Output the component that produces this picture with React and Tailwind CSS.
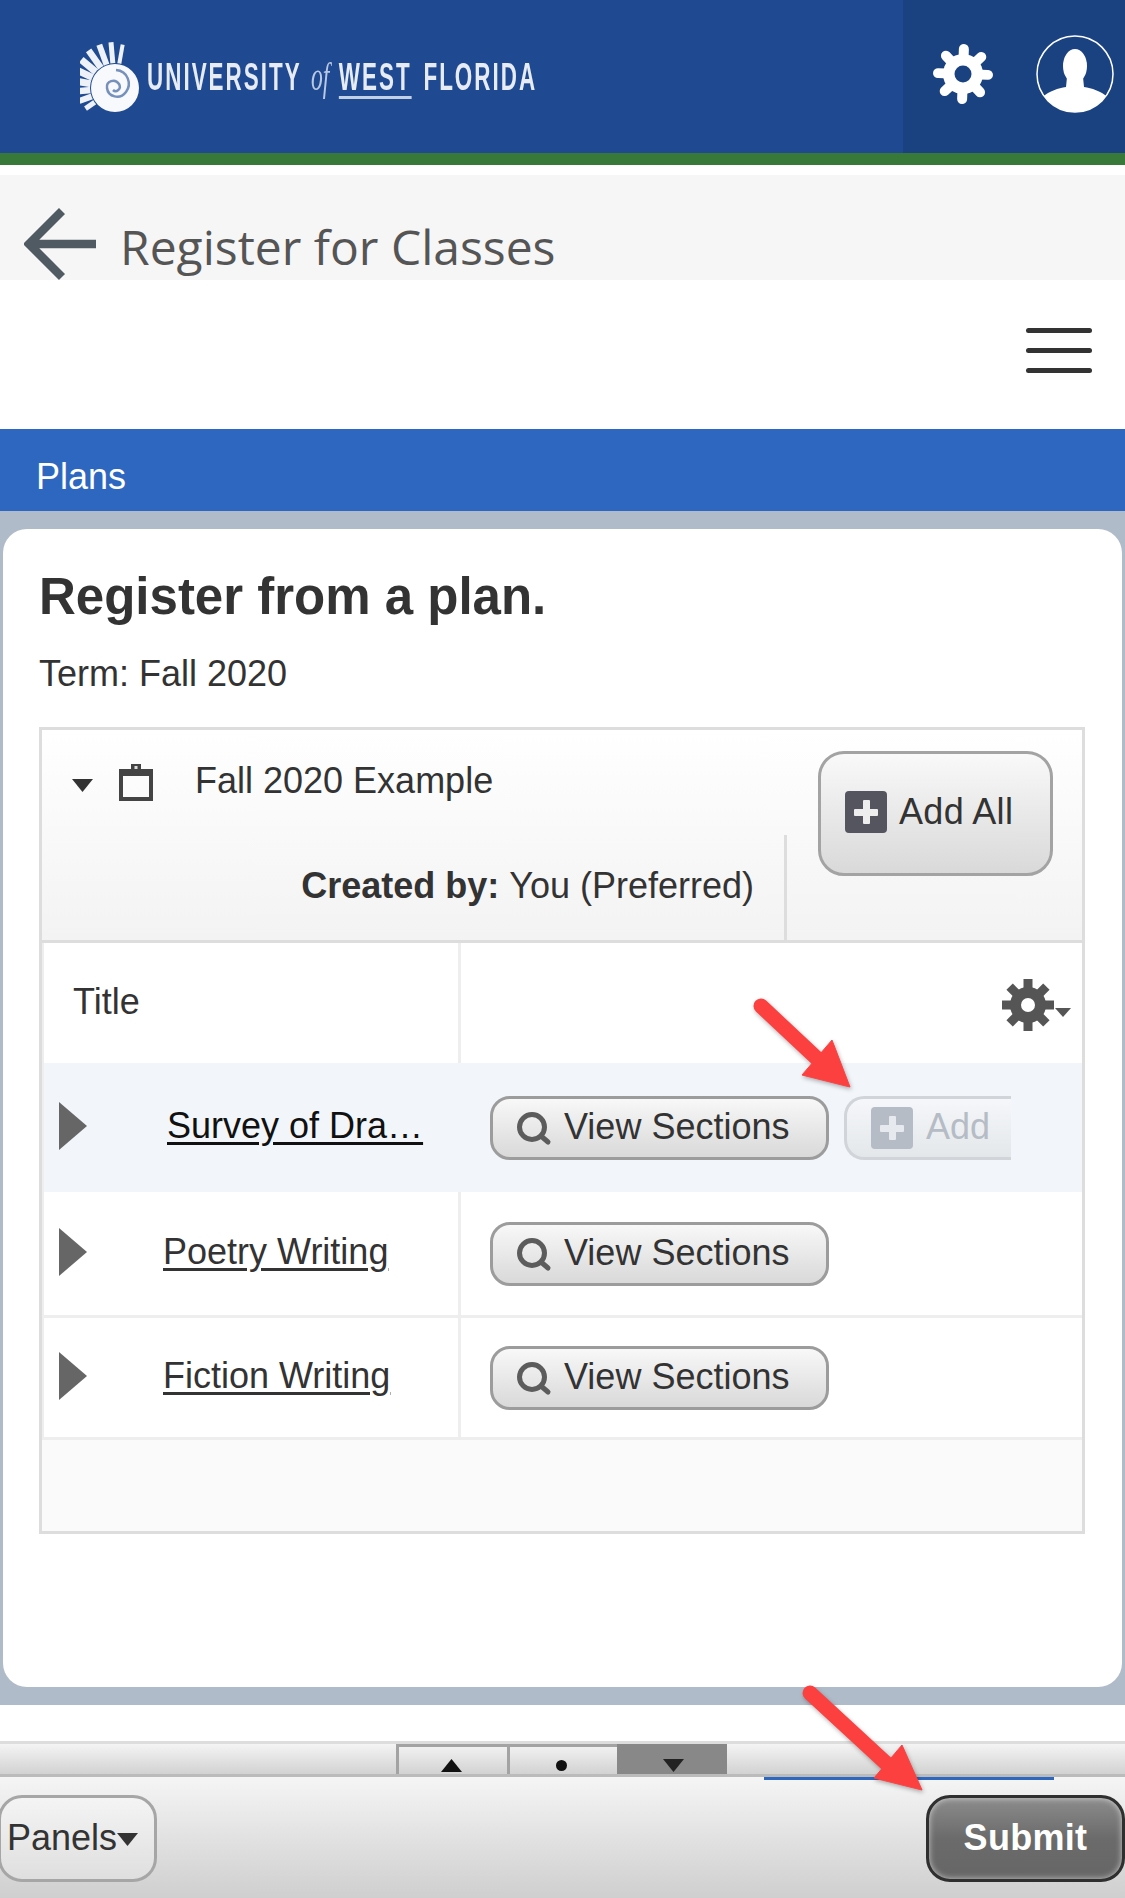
const ANGLES = [0, 45, 90, 135, 180, 225, 270, 315];

function HeaderGear() {
  return (
    <svg width="62" height="62" viewBox="0 0 62 62" className="block">
      <g stroke="#fff" strokeWidth="10" strokeLinecap="round">
        {ANGLES.map((a) => (
          <line key={a} x1="31" y1="31" x2="31" y2="6" transform={`rotate(${a + 2} 31 31)`} />
        ))}
      </g>
      <circle cx="31" cy="31" r="20" fill="#fff" />
      <circle cx="31" cy="31" r="8.5" fill="#1b4280" />
    </svg>
  );
}

function Avatar() {
  return (
    <svg width="78" height="78" viewBox="0 0 78 78" className="block">
      <defs>
        <clipPath id="avatarClip">
          <circle cx="39" cy="39" r="38" />
        </clipPath>
      </defs>
      <g clipPath="url(#avatarClip)" fill="#fff">
        <ellipse cx="39" cy="31" rx="12" ry="17" />
        <path d="M31 42 L47 42 L48 52 C56 53 64 56 72 62 L72 80 L6 80 L6 62 C14 56 22 53 30 52 Z" />
      </g>
      <circle cx="39" cy="39" r="38" fill="none" stroke="#fff" strokeWidth="1.5" />
    </svg>
  );
}

function Shell() {
  const rays = [
    [-80, 44, 4], [-95, 46, 5], [-110, 46, 6], [-125, 46, 6.5], [-140, 44, 7],
    [-155, 42, 7], [-170, 40, 7], [-185, 38, 6.5], [-200, 38, 6], [-215, 36, 5],
  ];
  return (
    <svg width="60" height="76" viewBox="0 0 60 76" className="block blur-[0.5px]">
      <g stroke="#eef2f8" strokeLinecap="butt">
        {rays.map(([a, len, w]) => {
          const rad = (a * Math.PI) / 180;
          const cx = 35;
          const cy = 50;
          return (
            <line
              key={a}
              x1={cx + Math.cos(rad) * 12}
              y1={cy + Math.sin(rad) * 12}
              x2={cx + Math.cos(rad) * len}
              y2={cy + Math.sin(rad) * len}
              strokeWidth={w}
            />
          );
        })}
      </g>
      <circle cx="35" cy="50" r="25" fill="#1f4a91" />
      <circle cx="35" cy="50" r="24" fill="#f7f9fc" />
      <path
        d="M36 32 C48 33 52 46 46 54 C40 62 28 59 27 50 C26 43 35 40 39 46 C42 51 36 55 33 52"
        fill="none"
        stroke="#1f4a91"
        strokeWidth="2.5"
        opacity="0.6"
      />
    </svg>
  );
}

function Logo() {
  return (
    <div className="flex items-center ml-[80px] h-[153px] pb-[2px]">
      <Shell />
      <div className="ml-[7px] w-[400px] h-[48px] pt-[3px] blur-[0.4px]">
        <div className="flex items-baseline origin-left scale-x-[0.59] text-[#e6ebf4] whitespace-nowrap w-[680px]">
          <span className="text-[38px] font-bold tracking-[3.4px] leading-[44px]">UNIVERSITY</span>
          <span className="text-[40px] italic leading-[44px] ml-[16px] text-[#b9c9e2]" style={{ fontFamily: '"Liberation Serif",serif' }}>
            of
          </span>
          <span className="text-[38px] font-bold tracking-[3.4px] leading-[44px] ml-[16px] underline decoration-[3px] underline-offset-[6px] decoration-[#c2d0e6]">
            WEST
          </span>
          <span className="text-[38px] font-bold tracking-[3.4px] leading-[44px] ml-[20px]">FLORIDA</span>
        </div>
      </div>
    </div>
  );
}

function PlusBox({ muted }) {
  return (
    <span className={`relative inline-block w-[42px] h-[42px] rounded-[4px] shrink-0 ${muted ? "bg-[#b5bcc5]" : "bg-[#55555f]"}`}>
      <span className={`absolute left-[9px] top-[18px] w-[24px] h-[7px] rounded-[1px] ${muted ? "bg-[#e6e9ee]" : "bg-[#eeeeee]"}`} />
      <span className={`absolute left-[17.5px] top-[9px] w-[7px] h-[24px] rounded-[1px] ${muted ? "bg-[#e6e9ee]" : "bg-[#eeeeee]"}`} />
    </span>
  );
}

function ViewSections() {
  return (
    <button className="flex items-center w-[339px] h-[64px] rounded-[20px] border-[3px] border-[#9c9c9c] bg-gradient-to-b from-[#f8f8f8] to-[#d9d9d9] pl-[23px] text-[36px] leading-none text-[#333] shrink-0">
      <svg width="36" height="36" viewBox="0 0 36 36" className="block shrink-0 mt-[3px]">
        <circle cx="16" cy="16" r="12.5" fill="none" stroke="#5c5c5c" strokeWidth="5" />
        <line x1="25" y1="25" x2="32" y2="31" stroke="#5c5c5c" strokeWidth="5" strokeLinecap="round" />
      </svg>
      <span className="ml-[12px] mt-[-2px]">View Sections</span>
    </button>
  );
}

function RowArrow() {
  return (
    <svg width="28" height="48" viewBox="0 0 28 48" className="block shrink-0">
      <path d="M0 0 L28 24 L0 48 Z" fill="#666" />
    </svg>
  );
}

function Caret({ w = 21, h = 13, color = "#333", up = false }) {
  return (
    <svg width={w} height={h} viewBox="0 0 21 13" className="block shrink-0">
      <path d={up ? "M0 13 L21 13 L10.5 0 Z" : "M0 0 L21 0 L10.5 13 Z"} fill={color} />
    </svg>
  );
}

function Row({ title, titlePad, extra, tint, last }) {
  return (
    <div className={`grid grid-cols-[419px_1fr] ${last ? "h-[122px]" : tint ? "h-[129px]" : "h-[126px]"} ${tint ? "bg-[#f2f6fb]" : "bg-white border-b-[3px] border-[#eeeeee]"}`}>
      <div className={`flex items-center pl-[15px] pb-[3px] border-l-[2px] border-[#eeeeee] ${tint ? "" : "border-r-[3px]"}`}>
        <RowArrow />
        <a
          className={`block underline underline-offset-[4px] text-[36px] leading-[44px] whitespace-nowrap ${tint ? "text-[#111]" : "text-[#333]"}`}
          style={{ marginLeft: titlePad }}
        >
          {title}
        </a>
      </div>
      <div className="flex items-center pl-[29px]">
        <ViewSections />
        {extra}
      </div>
    </div>
  );
}

export default function App() {
  return (
    <div
      className="relative w-[1125px] h-[1898px] overflow-hidden flex flex-col bg-white text-[#333]"
      style={{ fontFamily: '"Liberation Sans",Arial,sans-serif' }}
    >
      <header className="h-[153px] flex justify-between bg-[#1f4a91] shrink-0">
        <Logo />
        <div className="w-[222px] bg-[#1b4280] flex items-center pl-[29px] pb-[6px]">
          <HeaderGear />
          <div className="ml-[42px]">
            <Avatar />
          </div>
        </div>
      </header>
      <div className="h-[12px] bg-[#387838] shrink-0" />
      <div className="h-[10px] bg-white shrink-0" />
      <div className="h-[105px] bg-[#f6f6f6] shrink-0 overflow-hidden flex items-start pl-[24px] pt-[35px]">
        <svg width="72" height="72" viewBox="0 0 72 72" className="block shrink-0 mt-[-2px]">
          <path d="M38 3 L5 36 L38 69 M5 36 L72 36" fill="none" stroke="#4f5a63" strokeWidth="8.5" />
        </svg>
        <div
          className="ml-[24px] mt-[1px] text-[48px] leading-[72px] text-[#555] font-normal"
          style={{ fontFamily: '"Open Sans",sans-serif' }}
        >
          Register for Classes
        </div>
      </div>
      <div className="h-[149px] bg-white shrink-0 flex justify-end pr-[33px] pt-[48px]">
        <div className="w-[66px] flex flex-col gap-[15px]">
          <div className="h-[5px] bg-[#333] rounded-full" />
          <div className="h-[5px] bg-[#333] rounded-full" />
          <div className="h-[5px] bg-[#333] rounded-full" />
        </div>
      </div>
      <div className="h-[82px] bg-[#2d67bf] shrink-0 flex items-center pl-[36px] pt-[14px] text-[36px] text-white">Plans</div>

      <main className="h-[1194px] shrink-0 bg-[#b0bbc9] px-[3px] pt-[18px] pb-[18px]">
        <div className="h-full bg-white rounded-[24px] pl-[36px] pr-[37px] pt-[38px]">
          <h1 className="text-[51px] leading-[60px] font-bold text-[#333]">Register from a plan.</h1>
          <p className="mt-[25px] text-[36px] leading-[44px] text-[#333]">Term: Fall 2020</p>

          <section className="mt-[31px] w-[1046px] h-[807px] border-[3px] border-[#dddddd] flex flex-col">
            <div className="h-[213px] shrink-0 flex border-b-[3px] border-[#dddddd] bg-gradient-to-b from-white to-[#f3f3f3]">
              <div className="w-[745px] shrink-0 flex flex-col">
                <div className="h-[102px] flex items-center pl-[30px]">
                  <div className="mt-[8px]">
                    <Caret />
                  </div>
                  <svg width="34" height="38" viewBox="0 0 34 38" className="block ml-[26px] shrink-0 mt-[2px]">
                    <path d="M2 8 H32 V36 H2 Z" fill="none" stroke="#444" strokeWidth="4" />
                    <rect x="3" y="7" width="28" height="6" fill="#444" />
                    <rect x="12" y="1" width="10" height="7" fill="#444" />
                    <rect x="15.5" y="3" width="3" height="3" fill="#ddd" />
                  </svg>
                  <span className="ml-[42px] text-[36px] leading-none">Fall 2020 Example</span>
                </div>
                <div className="h-[105px] mt-[3px] pb-[4px] flex items-center justify-end pr-[30px] border-r-[3px] border-[#dddddd] text-[36px]">
                  <b>Created by:</b>
                  <span className="ml-[10px]">You (Preferred)</span>
                </div>
              </div>
              <div className="flex-1 pl-[31px] pt-[21px]">
                <button className="flex items-center w-[235px] h-[125px] rounded-[26px] border-[3px] border-[#a3a3a3] bg-gradient-to-b from-[#f9f9f9] to-[#d9d9d9] pl-[24px] pb-[3px] text-[36px]">
                  <PlusBox />
                  <span className="ml-[12px] tracking-[0.3px]">Add All</span>
                </button>
              </div>
            </div>

            <div className="grid grid-cols-[419px_1fr] h-[120px] shrink-0 bg-white">
              <div className="flex items-center pl-[29px] pb-[2px] border-l-[2px] border-r-[3px] border-[#eeeeee] text-[36px]">Title</div>
              <div className="flex items-center justify-end pr-[8px] pt-[4px]">
                <svg width="72" height="60" viewBox="0 0 72 60" className="block">
                  <g stroke="#555" strokeWidth="9">
                    {ANGLES.map((a) => (
                      <line key={a} x1="26" y1="30" x2="26" y2="4" transform={`rotate(${a} 26 30)`} />
                    ))}
                  </g>
                  <circle cx="26" cy="30" r="18" fill="#555" />
                  <circle cx="26" cy="30" r="7" fill="#fff" />
                  <path d="M53 33 L69 33 L61 42 Z" fill="#555" />
                </svg>
              </div>
            </div>

            <Row
              title="Survey of Dra…"
              titlePad="80px"
              tint
              extra={
                <div className="ml-[15px] w-[167px] h-[64px] shrink-0 rounded-l-[20px] border-y-[3px] border-l-[3px] border-[#d1d5da] bg-gradient-to-b from-[#f5f7fa] to-[#e4e7ea] flex items-center pl-[24px] text-[36px] text-[#b5bcc5]">
                  <PlusBox muted />
                  <span className="ml-[13px] mt-[-2px]">Add</span>
                </div>
              }
            />
            <Row title="Poetry Writing" titlePad="76px" />
            <Row title="Fiction Writing" titlePad="76px" last />
            <div className="flex-1 bg-[#fafafa]" />
          </section>
        </div>
      </main>

      <div className="h-[36px] shrink-0 bg-white" />

      <div className="h-[36px] shrink-0 flex pl-[396px] border-t-[3px] border-b-[3px] border-t-[#dddddd] border-b-[#bbbbbb] bg-gradient-to-b from-[#f4f4f4] to-[#d2d2d2]">
        <div className="w-[111px] h-full border-l-[3px] border-t-[3px] border-[#a3a3a3] flex items-end justify-center pb-[2px] pr-[3px]">
          <Caret up color="#111" />
        </div>
        <div className="w-[110px] h-full border-l-[3px] border-t-[3px] border-[#a3a3a3] flex items-end justify-center pb-[3px] pr-[5px]">
          <span className="block w-[11px] h-[11px] rounded-full bg-[#111]" />
        </div>
        <div className="w-[110px] h-full bg-[#888] flex items-end justify-center pb-[2px] pl-[2px]">
          <Caret color="#222" />
        </div>
      </div>

      <footer className="relative flex-1 flex justify-between items-start pt-[18px] bg-gradient-to-b from-[#f5f5f5] to-[#cfcfcf]">
        <div className="absolute left-[764px] top-0 w-[290px] h-[3px] bg-[#2d67bf]" />
        <button className="flex items-center w-[159px] h-[87px] ml-[-2px] rounded-[24px] border-[3px] border-[#a6a6a6] bg-gradient-to-b from-[#f4f4f4] to-[#dfdfdf] pl-[6px] pb-[2px] text-[36px]">
          Panels
          <span className="mt-[4px]">
            <Caret />
          </span>
        </button>
        <button className="flex items-center justify-center w-[199px] h-[87px] rounded-[24px] border-[3px] border-[#2f2f2f] bg-gradient-to-b from-[#8c8c8c] via-[#6b6b6b] to-[#666] pb-[2px] text-[36px] font-bold text-white tracking-[0.3px] shadow-[inset_0_0_6px_rgba(255,255,255,0.65)]">
          Submit
        </button>
      </footer>

      <svg className="absolute inset-0 pointer-events-none" width="1125" height="1898" viewBox="0 0 1125 1898" style={{ filter: "drop-shadow(1px 2px 2px rgba(0,0,0,0.3))" }}>
        <g fill="#fc4040" stroke="#fc4040" strokeLinejoin="round">
          <line x1="761" y1="1006" x2="825" y2="1066" strokeWidth="15" strokeLinecap="round" />
          <path d="M850 1087 L832 1040 L802 1075 Z" strokeWidth="1" />
          <line x1="810" y1="1693" x2="888" y2="1765" strokeWidth="15" strokeLinecap="round" />
          <path d="M922 1790 L902 1745 L874 1778 Z" strokeWidth="1" />
        </g>
      </svg>
    </div>
  );
}
